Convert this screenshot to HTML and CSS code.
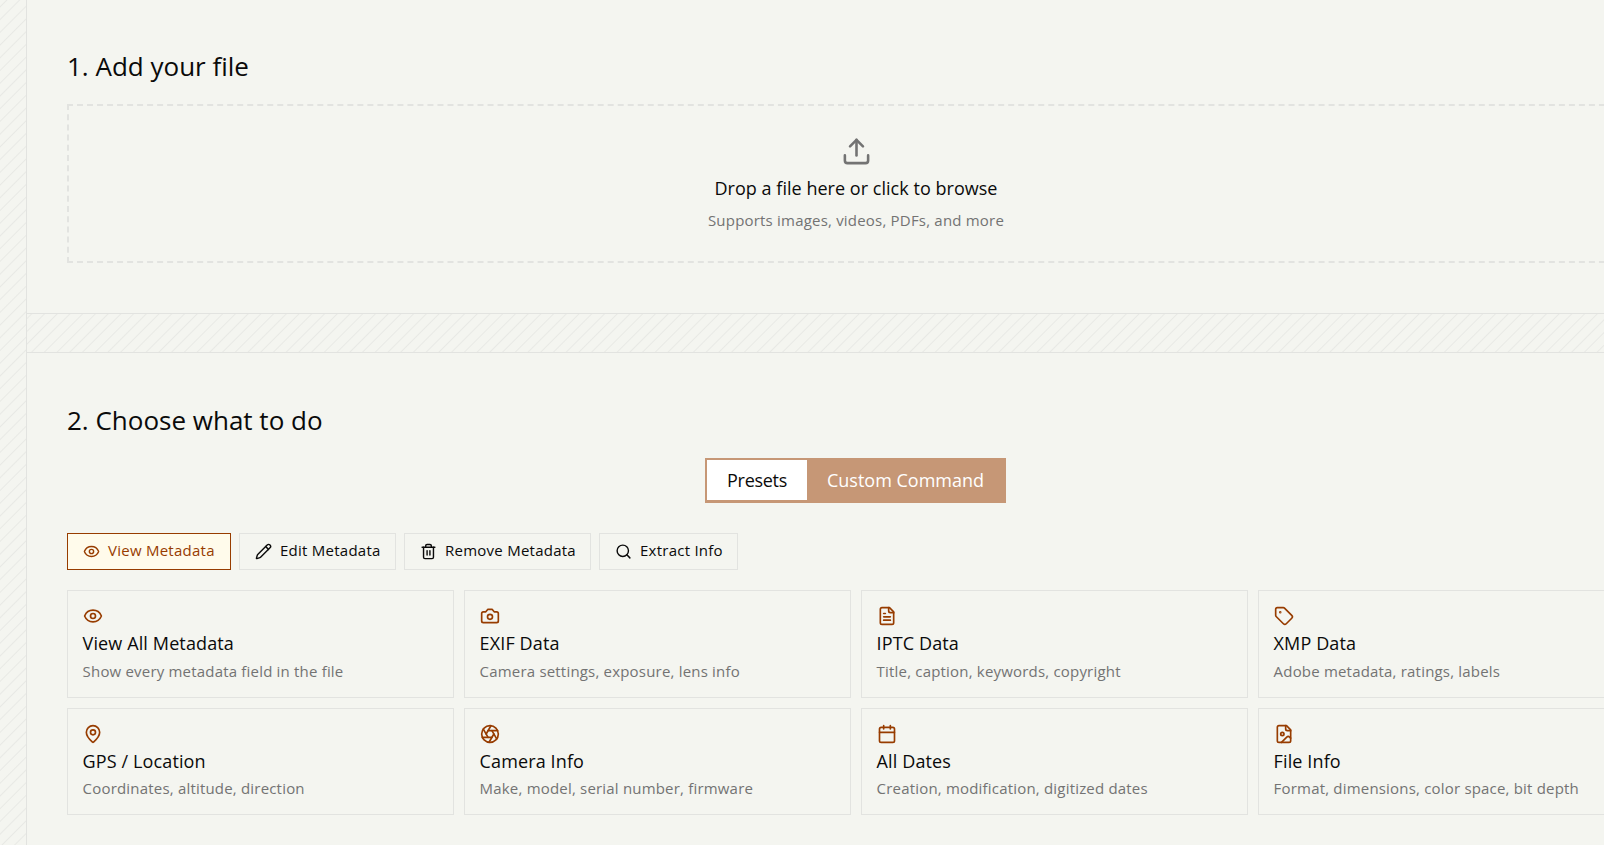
FILE: index.html
```html
<!DOCTYPE html>
<html lang="en">
<head>
    <meta charset="UTF-8">
    <meta name="viewport" content="width=device-width, initial-scale=1.0">
    <title>Metadata Tool</title>
    <link rel="stylesheet" href="styles.css">
</head>
<body>
    <div class="page">
        <div class="rail"></div>
        <main class="content">
            <section class="step step-file">
                <h2>1. Add your file</h2>
                <div class="dropzone">
                    <svg class="icon" viewBox="0 0 24 24"><path d="M12 3v12"/><path d="m17 8-5-5-5 5"/><path d="M21 15v4a2 2 0 0 1-2 2H5a2 2 0 0 1-2-2v-4"/></svg>
                    <p class="drop-title">Drop a file here or click to browse</p>
                    <p class="drop-hint">Supports images, videos, PDFs, and more</p>
                </div>
            </section>

            <div class="divider"></div>

            <section class="step step-action">
                <h2>2. Choose what to do</h2>
                <div class="mode">
                    <button class="mode-btn active">Presets</button>
                    <button class="mode-btn">Custom Command</button>
                </div>

                <div class="tabs">
                    <button class="tab tab-view active">
                        <svg class="icon" viewBox="0 0 24 24"><path d="M2.062 12.348a1 1 0 0 1 0-.696 10.75 10.75 0 0 1 19.876 0 1 1 0 0 1 0 .696 10.75 10.75 0 0 1-19.876 0"/><circle cx="12" cy="12" r="3"/></svg>
                        <span>View Metadata</span>
                    </button>
                    <button class="tab tab-edit">
                        <svg class="icon" viewBox="0 0 24 24"><path d="M21.174 6.812a1 1 0 0 0-3.986-3.987L3.842 16.174a2 2 0 0 0-.5.83l-1.321 4.352a.5.5 0 0 0 .623.622l4.353-1.32a2 2 0 0 0 .83-.497z"/><path d="m15 5 4 4"/></svg>
                        <span>Edit Metadata</span>
                    </button>
                    <button class="tab tab-remove">
                        <svg class="icon" viewBox="0 0 24 24"><path d="M3 6h18"/><path d="M19 6v14a2 2 0 0 1-2 2H7a2 2 0 0 1-2-2V6"/><path d="M8 6V4a2 2 0 0 1 2-2h4a2 2 0 0 1 2 2v2"/><path d="M10 11v6"/><path d="M14 11v6"/></svg>
                        <span>Remove Metadata</span>
                    </button>
                    <button class="tab tab-extract">
                        <svg class="icon" viewBox="0 0 24 24"><circle cx="11" cy="11" r="8"/><path d="m21 21-4.3-4.3"/></svg>
                        <span>Extract Info</span>
                    </button>
                </div>

                <div class="cards">
                    <div class="card">
                        <svg class="icon" viewBox="0 0 24 24"><path d="M2.062 12.348a1 1 0 0 1 0-.696 10.75 10.75 0 0 1 19.876 0 1 1 0 0 1 0 .696 10.75 10.75 0 0 1-19.876 0"/><circle cx="12" cy="12" r="3"/></svg>
                        <h3>View All Metadata</h3>
                        <p>Show every metadata field in the file</p>
                    </div>
                    <div class="card">
                        <svg class="icon" viewBox="0 0 24 24"><path d="M14.5 4h-5L7 7H4a2 2 0 0 0-2 2v9a2 2 0 0 0 2 2h16a2 2 0 0 0 2-2V9a2 2 0 0 0-2-2h-3z"/><circle cx="12" cy="13" r="3"/></svg>
                        <h3>EXIF Data</h3>
                        <p>Camera settings, exposure, lens info</p>
                    </div>
                    <div class="card">
                        <svg class="icon" viewBox="0 0 24 24"><path d="M15 2H6a2 2 0 0 0-2 2v16a2 2 0 0 0 2 2h12a2 2 0 0 0 2-2V7z"/><path d="M14 2v4a2 2 0 0 0 2 2h4"/><path d="M10 9H8"/><path d="M16 13H8"/><path d="M16 17H8"/></svg>
                        <h3>IPTC Data</h3>
                        <p>Title, caption, keywords, copyright</p>
                    </div>
                    <div class="card">
                        <svg class="icon" viewBox="0 0 24 24"><path d="M12.586 2.586A2 2 0 0 0 11.172 2H4a2 2 0 0 0-2 2v7.172a2 2 0 0 0 .586 1.414l8.704 8.704a2.426 2.426 0 0 0 3.42 0l6.58-6.58a2.426 2.426 0 0 0 0-3.42z"/><circle cx="7.5" cy="7.5" r=".5" fill="currentColor"/></svg>
                        <h3>XMP Data</h3>
                        <p>Adobe metadata, ratings, labels</p>
                    </div>
                    <div class="card">
                        <svg class="icon" viewBox="0 0 24 24"><path d="M20 10c0 4.993-5.539 10.193-7.399 11.799a1 1 0 0 1-1.202 0C9.539 20.193 4 14.993 4 10a8 8 0 0 1 16 0"/><circle cx="12" cy="10" r="3"/></svg>
                        <h3>GPS / Location</h3>
                        <p>Coordinates, altitude, direction</p>
                    </div>
                    <div class="card">
                        <svg class="icon" viewBox="0 0 24 24"><circle cx="12" cy="12" r="10"/><path d="m14.31 8 5.74 9.94"/><path d="M9.69 8h11.48"/><path d="m7.38 12 5.74-9.94"/><path d="M9.69 16 3.95 6.06"/><path d="M14.31 16H2.83"/><path d="m16.62 12-5.74 9.94"/></svg>
                        <h3>Camera Info</h3>
                        <p>Make, model, serial number, firmware</p>
                    </div>
                    <div class="card">
                        <svg class="icon" viewBox="0 0 24 24"><path d="M8 2v4"/><path d="M16 2v4"/><rect width="18" height="18" x="3" y="4" rx="2"/><path d="M3 10h18"/></svg>
                        <h3>All Dates</h3>
                        <p>Creation, modification, digitized dates</p>
                    </div>
                    <div class="card">
                        <svg class="icon" viewBox="0 0 24 24"><path d="M15 2H6a2 2 0 0 0-2 2v16a2 2 0 0 0 2 2h12a2 2 0 0 0 2-2V7z"/><path d="M14 2v4a2 2 0 0 0 2 2h4"/><circle cx="10" cy="12" r="2"/><path d="m20 17-1.296-1.296a2.41 2.41 0 0 0-3.408 0L9 22"/></svg>
                        <h3>File Info</h3>
                        <p>Format, dimensions, color space, bit depth</p>
                    </div>
                </div>
            </section>
        </main>
    </div>
</body>
</html>
```
FILE: styles.css
```css
* {
    margin: 0;
    padding: 0;
    box-sizing: border-box;
}

body {
    height: 100vh;
    overflow: hidden;
    background-color: #f4f5f0;
    color: #0a0a0a;
    font-family: "Segoe UI", "Open Sans", sans-serif;
}

.page {
    display: flex;
    width: 1685px;
    height: 100vh;
}

.rail,
.divider {
    background-image: repeating-linear-gradient(-45deg, transparent 0, transparent 7px, #e8e9e5 8px, transparent 9px);
}

.rail {
    width: 27px;
    flex-shrink: 0;
    border-right: 1px solid #e2e3e0;
}

.content {
    flex: 1;
}

.step {
    padding: 0 40px;
}

.step-file {
    height: 313px;
    padding-top: 47px;
}

.step-action {
    padding-top: 48px;
}

h2 {
    height: 38px;
    line-height: 38px;
    font-size: 26px;
    font-weight: 400;
}

.icon {
    flex-shrink: 0;
    fill: none;
    stroke: currentColor;
    stroke-width: 2;
    stroke-linecap: round;
    stroke-linejoin: round;
}

.dropzone {
    display: flex;
    flex-direction: column;
    align-items: center;
    height: 159px;
    margin-top: 19px;
    padding-top: 30px;
    border: 2px dashed #e2e3e0;
    color: #737373;
}

.dropzone .icon {
    width: 31px;
    height: 31px;
}

.drop-title {
    margin-top: 8px;
    line-height: 27px;
    font-size: 18px;
    letter-spacing: 0.03px;
    color: #0a0a0a;
}

.drop-hint {
    margin-top: 6px;
    line-height: 24px;
    font-size: 15px;
    letter-spacing: 0.2px;
}

.divider {
    height: 40px;
    border-top: 1px solid #e2e3e0;
    border-bottom: 1px solid #e2e3e0;
}

.mode {
    display: flex;
    width: 301px;
    height: 45px;
    margin: 19px auto 0 638px;
    padding: 2px 2px 3px;
    background-color: #c69776;
}

.mode-btn {
    flex: 1;
    border: none;
    background: none;
    color: #fff;
    font-family: inherit;
    font-size: 18px;
}

.mode-btn.active {
    flex: 0 0 100px;
    background-color: #fff;
    color: #0a0a0a;
    letter-spacing: -0.3px;
}

.tabs {
    display: flex;
    gap: 8px;
    margin-top: 30px;
}

.tab {
    display: flex;
    align-items: center;
    gap: 8px;
    height: 37px;
    padding-left: 15px;
    border: 1px solid #e2e3e0;
    background: none;
    color: #0a0a0a;
    font-family: inherit;
    font-size: 15px;
    letter-spacing: 0.25px;
    white-space: nowrap;
}

.tab .icon {
    width: 17px;
    height: 17px;
}

.tab span {
    padding-bottom: 3px;
}

.tab-view {
    width: 164px;
}

.tab-edit {
    width: 157px;
}

.tab-remove {
    width: 187px;
}

.tab-extract {
    width: 139px;
}

.tab.active {
    border-color: #973c00;
    background-color: #fffbeb;
    color: #973c00;
}

.cards {
    display: grid;
    grid-template-columns: repeat(4, 1fr);
    grid-template-rows: 108px 107px;
    gap: 10px;
    margin-top: 20px;
}

.card {
    padding: 15px 14.6px;
    border: 1px solid #e2e3e0;
}

.card .icon {
    display: block;
    width: 20px;
    height: 20px;
    color: #973c00;
}

.card h3 {
    margin-top: 4px;
    line-height: 27px;
    font-size: 18px;
    font-weight: 400;
    letter-spacing: 0.12px;
}

.card p {
    margin-top: 1px;
    line-height: 26px;
    font-size: 15px;
    letter-spacing: 0.19px;
    color: #737373;
}

.card:nth-child(n+5) p {
    margin-top: 0;
}
```
